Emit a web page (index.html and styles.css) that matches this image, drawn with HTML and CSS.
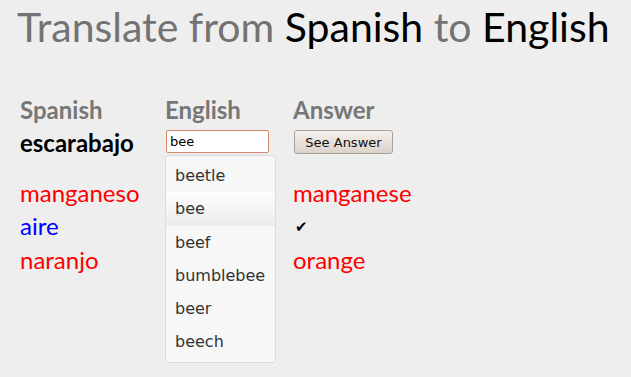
FILE: index.html
```html
<!DOCTYPE html>
<html lang="en">
<head>
    <meta charset="UTF-8">
    <title>Translate</title>
    <link rel="stylesheet" href="styles.css">
</head>
<body>

    <h1 class="title">Translate from <span class="lang">Spanish</span> to <span class="lang">English</span></h1>

    <div class="quiz">
        <!-- column headers -->
        <div class="head">Spanish</div>
        <div class="head">English</div>
        <div class="head">Answer</div>

        <!-- current word -->
        <div class="word">escarabajo</div>
        <div class="entry">
            <input type="text" class="guess" value="bee">
            <ul class="suggest">
                <li>beetle</li>
                <li class="active">bee</li>
                <li>beef</li>
                <li>bumblebee</li>
                <li>beer</li>
                <li>beech</li>
            </ul>
        </div>
        <div class="entry"><button class="see-btn">See Answer</button></div>
    </div>

    <!-- previous results -->
    <div class="results">
        <div class="past wrong">manganeso</div>
        <div></div>
        <div class="past wrong">manganese</div>

        <div class="past right">aire</div>
        <div></div>
        <div class="past check">&#10004;</div>

        <div class="past wrong">naranjo</div>
        <div></div>
        <div class="past wrong">orange</div>
    </div>

</body>
</html>
```

FILE: styles.css
```css
html {
    height: 100%;
}

body {
    background-color: #eeeeee;
    font-family: 'Lato', 'Open Sans', sans-serif;
    margin: 0;
    padding: 0 0 0 20px;
    min-height: 100%;
}

/* Page title */
.title {
    font-size: 41px;
    font-weight: normal;
    color: #737373;
    margin: 3px 0 0 -3px;
    line-height: 48px;
}

.title .lang {
    color: #000;
}

/* Quiz table */
.quiz,
.results {
    display: grid;
    grid-template-columns: 145px 128px auto;
    font-size: 24px;
}

.quiz {
    margin-top: 44px;
    position: relative;
    z-index: 2;
}

.head {
    font-weight: bold;
    color: #777;
    line-height: 30px;
}

.word {
    font-weight: bold;
    color: #000;
    line-height: 30px;
    padding-top: 3px;
}

.entry {
    position: relative;
    padding-top: 5px;
}

.guess {
    display: block;
    width: 103px;
    height: 23px;
    box-sizing: border-box;
    border: 1px solid #d48a6a;
    border-radius: 2px;
    background: #fff;
    font-family: 'DejaVu Sans', sans-serif;
    font-size: 13px;
    padding: 0 3px;
    margin: 0 0 0 1px;
    outline: none;
}

/* Autocomplete list */
.suggest {
    position: absolute;
    top: 30px;
    left: 0;
    width: 111px;
    box-sizing: border-box;
    margin: 0;
    padding: 3px 0;
    list-style: none;
    background: #f7f7f7;
    border: 1px solid #dcdcdc;
    border-radius: 3px;
    font-family: 'DejaVu Sans', sans-serif;
    font-size: 16px;
    color: #333;
}

.suggest li {
    line-height: 33.3px;
    padding-left: 9px;
}

.suggest li.active {
    background: linear-gradient(#fdfdfd, #ececec);
}

.see-btn {
    display: block;
    margin: 0 0 0 1px;
    width: 99px;
    height: 24px;
    font-family: 'DejaVu Sans', sans-serif;
    font-size: 13px;
    color: #111;
    background: linear-gradient(#f4f0ec, #dcd3cb);
    border: 1px solid #a9a29c;
    border-radius: 3px;
    padding: 0;
}

/* Earlier answers */
.results {
    margin-top: 18px;
}

.past {
    line-height: 33.3px;
}

.wrong {
    color: #ff0000;
}

.right {
    color: #0000ff;
}

.check {
    font-size: 15px;
    color: #000;
    padding: 2px 0 0 2px;
    line-height: 31.3px;
}
```
